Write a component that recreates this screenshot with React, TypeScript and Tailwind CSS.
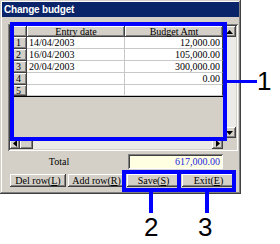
import React from "react";

const raised =
  "bg-[#d4d0c8] shadow-[inset_-1px_-1px_#404040,inset_1px_1px_#ffffff,inset_-2px_-2px_#808080]";

function Tri({ dir }: { dir: "up" | "down" | "left" | "right" }) {
  const vertical = dir === "up" || dir === "down";
  const w = vertical ? 7 : 4;
  const h = vertical ? 4 : 7;
  const pts =
    dir === "up"
      ? "3.5,0 7,4 0,4"
      : dir === "down"
      ? "0,0 7,0 3.5,4"
      : dir === "left"
      ? "4,0 4,7 0,3.5"
      : "0,0 0,7 4,3.5";
  return (
    <svg width={w} height={h} viewBox={`0 0 ${w} ${h}`}>
      <polygon points={pts} fill="#000" />
    </svg>
  );
}

const rows = [
  { n: "1", d: "14/04/2003", a: "12,000.00" },
  { n: "2", d: "16/04/2003", a: "105,000.00" },
  { n: "3", d: "20/04/2003", a: "300,000.00" },
  { n: "4", d: "", a: "0.00" },
  { n: "5", d: "", a: "" },
];

export default function App() {
  return (
    <div className="relative w-[280px] h-[244px] bg-white overflow-hidden font-['Liberation_Serif',serif] text-[10px] text-black leading-none">
      {/* Window */}
      <div className="w-[241px] h-[194px] p-[2px] bg-[#d4d0c8] shadow-[inset_-1px_-1px_#404040,inset_1px_1px_#d4d0c8,inset_-2px_-2px_#808080,inset_2px_2px_#ffffff] flex flex-col">
        <div className="h-[15px] bg-[#0a246a] flex items-center pl-[2px] text-white font-bold text-[10px] font-['Liberation_Sans',sans-serif] tracking-[-0.2px]">
          Change budget
        </div>
        <div className="flex flex-col pl-[6px] pt-[7px]">
          {/* Grid box */}
          <div className="w-[230px] h-[127px] p-[2px] bg-[#d4d0c8] shadow-[inset_1px_1px_#808080,inset_-1px_-1px_#ffffff,inset_2px_2px_#404040,inset_-2px_-2px_#d4d0c8] flex flex-col">
            <div className="flex h-[112px]">
              {/* Table */}
              <div className="w-[213px] flex flex-col bg-[#d4d0c8]">
                <div className="grid grid-cols-[17px_98px_98px] h-[11px]">
                  <div className={raised}></div>
                  <div className={`${raised} flex items-center justify-center`}>Entry date</div>
                  <div className={`${raised} flex items-center justify-center`}>Budget Amt</div>
                </div>
                {rows.map((r, i) => (
                  <div
                    key={r.n}
                    className={`grid grid-cols-[17px_98px_98px] h-[12px] ${
                      i === rows.length - 1 ? "border-b border-black" : ""
                    }`}
                  >
                    <div className={`${raised} flex items-center justify-center`}>{r.n}</div>
                    <div className="bg-white border-r border-b border-[#c8c8c8] flex items-center pl-[2px]">
                      {r.d}
                    </div>
                    <div className="bg-white border-r border-b border-r-[#404040] border-b-[#c8c8c8] flex items-center justify-end pr-[2px]">
                      {r.a}
                    </div>
                  </div>
                ))}
              </div>
              {/* Vertical scrollbar */}
              <div className="w-[13px] flex flex-col bg-[#ebeae6]">
                <div className={`${raised} h-[11px] flex items-center justify-center`}>
                  <Tri dir="up" />
                </div>
                <div className="flex-1"></div>
                <div className={`${raised} h-[11px] flex items-center justify-center`}>
                  <Tri dir="down" />
                </div>
              </div>
            </div>
            {/* Horizontal scrollbar */}
            <div className="flex h-[11px]">
              <div className="w-[213px] flex bg-[#ebeae6]">
                <div className={`${raised} w-[10px] flex items-center justify-center`}>
                  <Tri dir="left" />
                </div>
                <div className={`${raised} w-[13px]`}></div>
                <div className="flex-1"></div>
                <div className={`${raised} w-[11px] flex items-center justify-center`}>
                  <Tri dir="right" />
                </div>
              </div>
              <div className="w-[13px] bg-[#d4d0c8]"></div>
            </div>
          </div>

          {/* Total row */}
          <div className="flex items-center h-[15px] mt-[3px]">
            <div className="w-[102px] text-center">Total</div>
            <div className="ml-[18px] w-[95px] h-[15px] bg-[#ffffe1] shadow-[inset_1px_1px_#808080,inset_-1px_-1px_#ffffff,inset_2px_2px_#404040] flex items-center justify-end pr-[3px] text-[#1f1fe0]">
              617,000.00
            </div>
          </div>

          {/* Buttons */}
          <div className="flex h-[13px] mt-[5px] ml-[2px] gap-[2px]">
            <div className={`${raised} w-[56px] flex items-center justify-center`}>
              Del row(<span className="underline">L</span>)
            </div>
            <div className={`${raised} w-[57px] flex items-center justify-center`}>
              Add row(<span className="underline">R</span>)
            </div>
            <div className={`${raised} w-[53px] flex items-center justify-center`}>
              Save(<span className="underline">S</span>)
            </div>
            <div className={`${raised} w-[53px] flex items-center justify-center`}>
              Exit(<span className="underline">E</span>)
            </div>
          </div>
        </div>
      </div>

      {/* Annotations */}
      <div className="absolute left-[10px] top-[22px] w-[217px] h-[119px] border-[4px] border-[#0000ff]"></div>
      <div className="absolute left-[227px] top-[80px] w-[30px] h-[3px] bg-[#0000ff]"></div>
      <div className="absolute left-[257px] top-[68px] text-[26px] leading-none font-['Liberation_Sans',sans-serif]">1</div>

      <div className="absolute left-[122px] top-[170px] w-[114px] h-[22px] border-[4px] border-[#0000ff]"></div>
      <div className="absolute left-[177px] top-[170px] w-[4px] h-[22px] bg-[#0000ff]"></div>
      <div className="absolute left-[149px] top-[192px] w-[4px] h-[21px] bg-[#0000ff]"></div>
      <div className="absolute left-[205px] top-[192px] w-[4px] h-[21px] bg-[#0000ff]"></div>
      <div className="absolute left-[144px] top-[214px] text-[26px] leading-none font-['Liberation_Sans',sans-serif]">2</div>
      <div className="absolute left-[198px] top-[214px] text-[26px] leading-none font-['Liberation_Sans',sans-serif]">3</div>
    </div>
  );
}
